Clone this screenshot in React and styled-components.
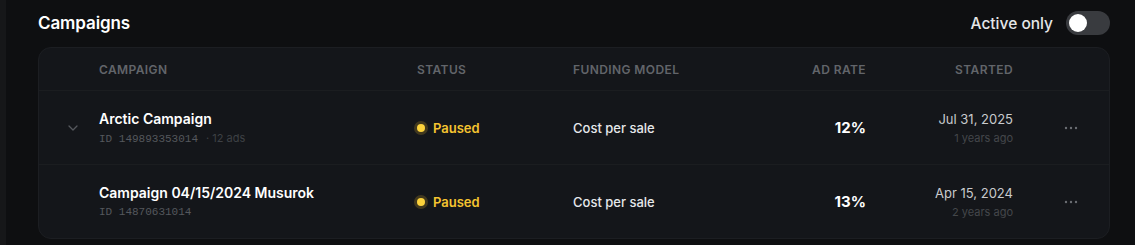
import React from 'react';
import styled, { createGlobalStyle } from 'styled-components';

const GlobalStyle = createGlobalStyle`
  html, body {
    margin: 0;
    padding: 0;
    background: #0e0f11;
  }
  body {
    font-family: Inter, "Noto Sans", sans-serif;
    -webkit-font-smoothing: antialiased;
  }
`;

const campaigns = [
  {
    name: 'Arctic Campaign',
    id: '149893353014',
    ads: '12 ads',
    status: 'Paused',
    funding: 'Cost per sale',
    rate: '12%',
    date: 'Jul 31, 2025',
    ago: '1 years ago',
    expandable: true,
  },
  {
    name: 'Campaign 04/15/2024 Musurok',
    id: '14870631014',
    status: 'Paused',
    funding: 'Cost per sale',
    rate: '13%',
    date: 'Apr 15, 2024',
    ago: '2 years ago',
  },
];

const Chevron = () => (
  <svg width="10" height="6" viewBox="0 0 10 6" fill="none">
    <path d="M1 1l4 4 4-4" stroke="#55585d" strokeWidth="1.3" strokeLinecap="round" strokeLinejoin="round" />
  </svg>
);

const Dots = () => (
  <svg width="14" height="4" viewBox="0 0 14 4">
    <circle cx="2" cy="2" r="1.2" fill="#6b6e73" />
    <circle cx="7" cy="2" r="1.2" fill="#6b6e73" />
    <circle cx="12" cy="2" r="1.2" fill="#6b6e73" />
  </svg>
);

export default function App() {
  return (
    <Page>
      <GlobalStyle />
      <Edge />
      <Main>
        <TopBar>
          <Title>Campaigns</Title>
          <Filter>
            Active only
            <Toggle><Knob /></Toggle>
          </Filter>
        </TopBar>
        <Card>
          <HeadRow>
            <span />
            <HeadCell>Campaign</HeadCell>
            <HeadCell>Status</HeadCell>
            <HeadCell>Funding model</HeadCell>
            <HeadCell $right>Ad rate</HeadCell>
            <HeadCell $right>Started</HeadCell>
            <span />
          </HeadRow>
          {campaigns.map((c) => (
            <Row key={c.id}>
              <ExpandCell>{c.expandable && <Chevron />}</ExpandCell>
              <Stack>
                <Name>{c.name}</Name>
                <Meta>
                  <Mono>ID {c.id}</Mono>
                  {c.ads && <Ads>· {c.ads}</Ads>}
                </Meta>
              </Stack>
              <Status>
                <Dot />
                {c.status}
              </Status>
              <Funding>{c.funding}</Funding>
              <Rate>{c.rate}</Rate>
              <Stack $right>
                <DateText>{c.date}</DateText>
                <Ago>{c.ago}</Ago>
              </Stack>
              <Actions><Dots /></Actions>
            </Row>
          ))}
        </Card>
      </Main>
    </Page>
  );
}

const Page = styled.div`
  display: flex;
  width: 1135px;
  height: 245px;
  background: #0e0f11;
  overflow: hidden;
`;

const Edge = styled.div`
  width: 6px;
  flex-shrink: 0;
  background: #161719;
`;

const Main = styled.div`
  flex: 1;
  padding: 0 25px 0 32px;
`;

const TopBar = styled.div`
  height: 46px;
  display: flex;
  align-items: center;
  justify-content: space-between;
`;

const Title = styled.h2`
  margin: 0;
  font-size: 17px;
  font-weight: 600;
  color: #ffffff;
  letter-spacing: -0.1px;
`;

const Filter = styled.label`
  display: flex;
  align-items: center;
  gap: 13px;
  font-size: 15.5px;
  font-weight: 500;
  color: #e4e6e8;
`;

const Toggle = styled.span`
  width: 44px;
  height: 24px;
  border-radius: 12px;
  background: #393b3f;
  display: flex;
  align-items: center;
  padding: 0 3px;
  box-sizing: border-box;
`;

const Knob = styled.span`
  width: 18px;
  height: 18px;
  border-radius: 50%;
  background: #ffffff;
`;

const Card = styled.div`
  margin-top: 1px;
  background: #14161a;
  border: 1px solid #1c1e22;
  border-radius: 13px;
  overflow: hidden;
`;

const grid = `
  display: grid;
  grid-template-columns: 60px 318px 156px 193px 100px 147px 1fr;
  align-items: center;
`;

const HeadRow = styled.div`
  ${grid}
  height: 42px;
  border-bottom: 1px solid #1b1d20;
`;

const HeadCell = styled.span`
  font-size: 12px;
  font-weight: 600;
  letter-spacing: 0.4px;
  text-transform: uppercase;
  color: #62656a;
  text-align: ${(p) => (p.$right ? 'right' : 'left')};
`;

const Row = styled.div`
  ${grid}
  height: 73px;
  & + & {
    border-top: 1px solid #1b1d20;
  }
`;

const ExpandCell = styled.div`
  display: flex;
  justify-content: center;
  padding-left: 8px;
`;

const Stack = styled.div`
  display: flex;
  flex-direction: column;
  gap: 3px;
  align-items: ${(p) => (p.$right ? 'flex-end' : 'flex-start')};
`;

const Name = styled.span`
  font-size: 14px;
  font-weight: 600;
  color: #ffffff;
  line-height: 18px;
`;

const Meta = styled.span`
  display: flex;
  align-items: baseline;
  gap: 8px;
  line-height: 14px;
`;

const Mono = styled.span`
  font-family: "Liberation Mono", monospace;
  font-size: 11px;
  color: #55585d;
`;

const Ads = styled.span`
  font-size: 11px;
  color: #3e4145;
`;

const Status = styled.span`
  display: flex;
  align-items: center;
  gap: 8px;
  font-size: 13px;
  font-weight: 600;
  color: #f4c430;
`;

const Dot = styled.span`
  width: 8px;
  height: 8px;
  border-radius: 50%;
  background: #fcd23c;
  box-shadow: 0 0 0 3px rgba(245, 196, 48, 0.2);
`;

const Funding = styled.span`
  font-size: 13px;
  font-weight: 500;
  color: #e6e8eb;
`;

const Rate = styled.span`
  text-align: right;
  font-size: 15px;
  font-weight: 700;
  color: #ffffff;
`;

const DateText = styled.span`
  font-size: 13px;
  color: #c8cacd;
  line-height: 18px;
`;

const Ago = styled.span`
  font-size: 11px;
  color: #44474b;
  line-height: 14px;
`;

const Actions = styled.div`
  display: flex;
  padding-left: 51px;
`;
